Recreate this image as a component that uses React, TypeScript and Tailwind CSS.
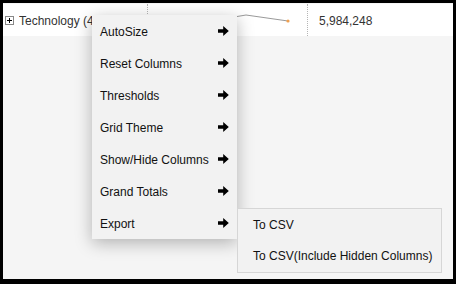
import React from "react";

const Arrow = () => (
  <svg width="11" height="10" viewBox="0 0 11 10" className="block">
    <path d="M0 3.3 H5.2 V0 L10.8 5 L5.2 10 V6.7 H0 Z" fill="#000" />
  </svg>
);

const items = [
  "AutoSize",
  "Reset Columns",
  "Thresholds",
  "Grid Theme",
  "Show/Hide Columns",
  "Grand Totals",
  "Export",
];

export default function App() {
  return (
    <div
      className="w-[456px] h-[284px] border-black border-l-[3px] border-r-[3px] border-t-[3px] border-b-[5px] overflow-hidden"
      style={{ fontFamily: '"Liberation Sans", Arial, sans-serif' }}
    >
      <div className="relative w-full h-full bg-[#f5f5f5] pt-px">
        <div className="flex h-8 bg-white text-[12px] text-[#333]">
          <div className="w-[145px] flex items-center pl-[2px] pt-[2px] gap-[5px] border-r border-dotted border-[#b5b5b5]">
            <div className="w-[9px] h-[9px] border border-[#888] bg-white flex items-center justify-center relative -mt-[2px]">
              <div className="absolute w-[5px] h-px bg-black" />
              <div className="absolute w-px h-[5px] bg-black" />
            </div>
            <span className="whitespace-nowrap overflow-hidden max-w-[73px]">Technology (4 Items)</span>
          </div>
          <div className="w-[160px] relative border-r border-dotted border-[#b5b5b5]">
            <svg width="159" height="32" className="absolute left-0 top-0">
              <polyline
                points="60,15 74,13 88,12.7 98,11 140,17"
                fill="none"
                stroke="#9a9a9a"
                strokeWidth="1"
              />
              <circle cx="140" cy="17" r="1.6" fill="#f0a050" />
            </svg>
          </div>
          <div className="flex-1 flex items-center pl-[11px] pt-[2px]">5,984,248</div>
        </div>

        <div className="absolute left-[89px] top-[12px] w-[145px] bg-[#f2f2f2] shadow-[0_4px_16px_rgba(0,0,0,0.28)] text-[12px] text-[#111]">
          {items.map((t) => (
            <div key={t} className="h-8 flex items-center justify-between pl-2 pr-[8px]">
              <span className="pt-px">{t}</span>
              <Arrow />
            </div>
          ))}
        </div>

        <div className="absolute left-[234px] top-[205px] w-[205px] h-[65px] bg-[#f2f2f2] border border-[#d6d6d6] text-[12px] text-[#111] flex flex-col">
          <div className="h-8 flex items-center pl-[15px]">To CSV</div>
          <div className="h-8 flex items-center pl-[15px]">To CSV(Include Hidden Columns)</div>
        </div>
      </div>
    </div>
  );
}
